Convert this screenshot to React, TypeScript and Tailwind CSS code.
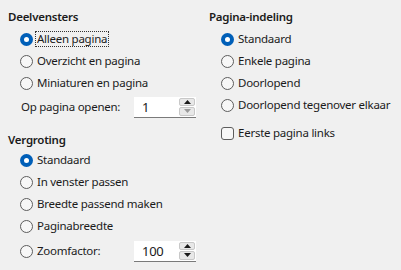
import React from 'react';

const font = { fontFamily: '"Segoe UI", "Noto Sans", "Open Sans", sans-serif' };

function Radio({ checked, label, focus }: { checked?: boolean; label: string; focus?: boolean }) {
  return (
    <div className="flex h-[22px] items-center whitespace-nowrap pl-[12px]">
      {checked ? (
        <span className="flex h-[13px] w-[13px] items-center justify-center rounded-full bg-[#005fb8]">
          <span className="h-[5px] w-[5px] rounded-full bg-white" />
        </span>
      ) : (
        <span className="h-[13px] w-[13px] rounded-full border border-[#5d5d5d] bg-[#f7f7f7]" />
      )}
      <span
        className={
          focus
            ? 'ml-[2px] border border-dotted border-[#333] px-[1px] leading-[14px]'
            : 'ml-[4px] leading-[14px]'
        }
      >
        {label}
      </span>
    </div>
  );
}

function Spin({ value, downDisabled }: { value: string; downDisabled?: boolean }) {
  return (
    <div className="flex h-[21px] w-[62px] items-stretch border-b border-[#7a7a7a] bg-white">
      <span className="flex-1 pl-[8px] text-[13px] leading-[20px]">{value}</span>
      <div className="flex w-[17px] flex-col gap-[1px] py-[1px] pr-[1px]">
        <span className="flex flex-1 items-center justify-center rounded-[2px] border border-[#c8c8c8] bg-[#e8e8e8]">
          <svg width="7" height="4" viewBox="0 0 7 4">
            <path d="M0 4 L3.5 0 L7 4 Z" fill="#1a1a1a" />
          </svg>
        </span>
        <span className="flex flex-1 items-center justify-center rounded-[2px] border border-[#c8c8c8] bg-[#e8e8e8]">
          <svg width="7" height="4" viewBox="0 0 7 4">
            <path d="M0 0 L3.5 4 L7 0 Z" fill={downDisabled ? '#9a9a9a' : '#1a1a1a'} />
          </svg>
        </span>
      </div>
    </div>
  );
}

export default function App() {
  return (
    <div
      className="flex h-[270px] w-[401px] bg-[#f0f0f0] text-[11.5px] tracking-[-0.25px] text-[#1b1b1b]"
      style={font}
    >
      {/* left column */}
      <div className="flex w-[201px] flex-col pl-[8px] pt-[9px]">
        <div className="h-4 font-semibold leading-4">Deelvensters</div>
        <div className="mt-[3px]">
          <Radio checked focus label="Alleen pagina" />
          <Radio label="Overzicht en pagina" />
          <Radio label="Miniaturen en pagina" />
        </div>
        <div className="mt-[2px] flex h-[22px] items-center pl-[13px]">
          <span className="w-[113px] whitespace-nowrap">Op pagina openen:</span>
          <Spin value="1" downDisabled />
        </div>
        <div className="mt-[14px] h-4 font-semibold leading-4">Vergroting</div>
        <div className="mt-[1px]">
          <Radio checked label="Standaard" />
          <Radio label="In venster passen" />
          <Radio label="Breedte passend maken" />
          <Radio label="Paginabreedte" />
        </div>
        <div className="mt-[3px] flex h-[22px] items-center">
          <div className="w-[126px]">
            <Radio label="Zoomfactor:" />
          </div>
          <Spin value="100" />
        </div>
      </div>
      {/* right column */}
      <div className="flex flex-1 flex-col pl-[8px] pt-[9px]">
        <div className="h-4 font-semibold leading-4">Pagina-indeling</div>
        <div className="mt-[3px]">
          <Radio checked label="Standaard" />
          <Radio label="Enkele pagina" />
          <Radio label="Doorlopend" />
          <Radio label="Doorlopend tegenover elkaar" />
        </div>
        <div className="mt-[6px] flex h-[22px] items-center whitespace-nowrap pl-[12px]">
          <span className="h-[13px] w-[13px] rounded-[3px] border border-[#5d5d5d] bg-[#f7f7f7]" />
          <span className="ml-[4px]">Eerste pagina links</span>
        </div>
      </div>
    </div>
  );
}
